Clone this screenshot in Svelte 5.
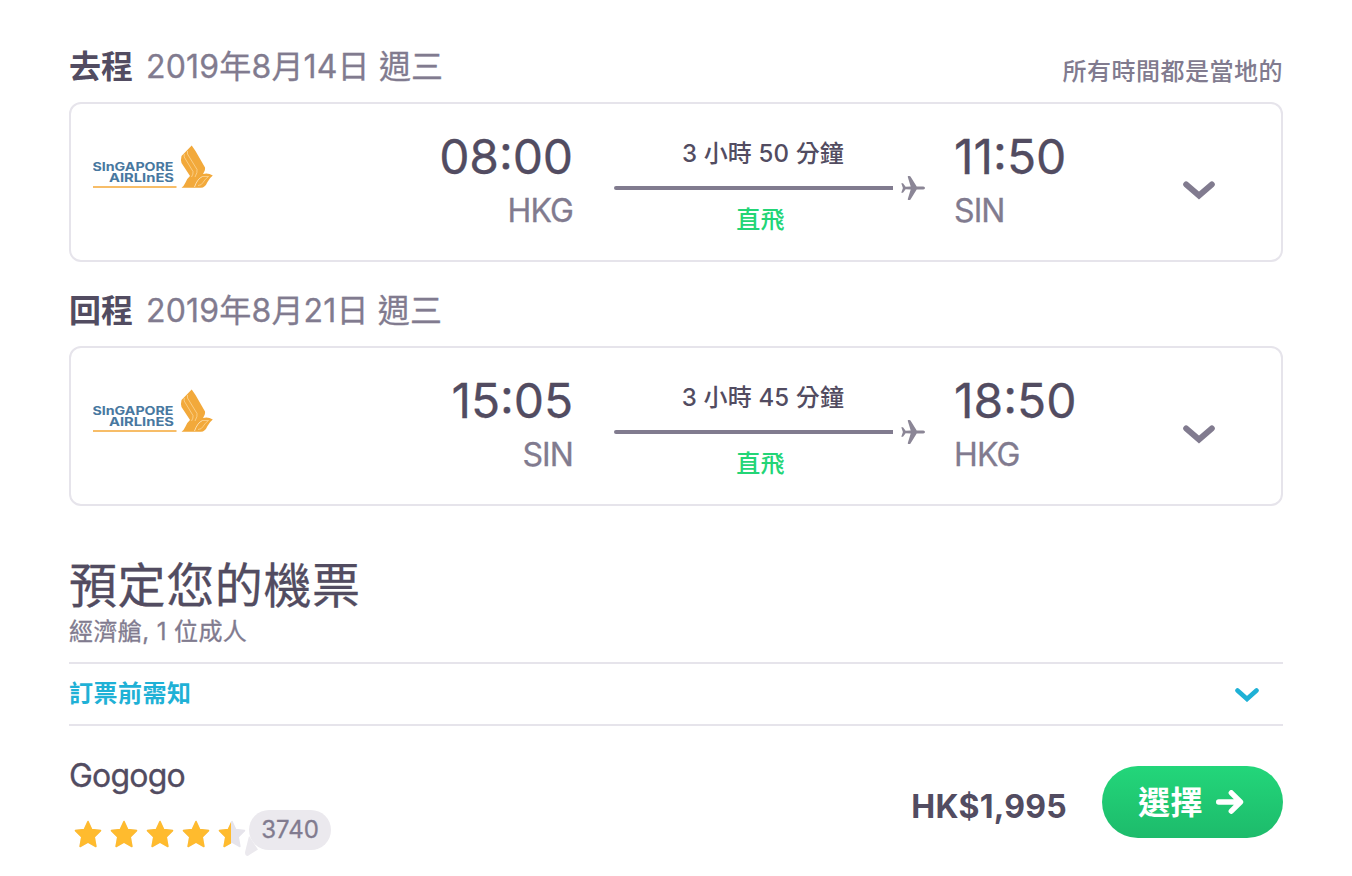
<script>
	const legs = [
		{
			label: "去程",
			date: "2019年8月14日 週三",
			departTime: "08:00",
			departCode: "HKG",
			duration: "3 小時 50 分鐘",
			arriveTime: "11:50",
			arriveCode: "SIN"
		},
		{
			label: "回程",
			date: "2019年8月21日 週三",
			departTime: "15:05",
			departCode: "SIN",
			duration: "3 小時 45 分鐘",
			arriveTime: "18:50",
			arriveCode: "HKG"
		}
	];

	const stars = [1, 1, 1, 1, 0.46];
	const starPath =
		"M14 1.5 L17.7 9.500 L26.500 10.600 L20.2 17 L21.900 26.500 L14 22.200 L6.100 26.500 L7.800 17 L1.500 10.600 L10.300 9.500 Z";
</script>

<div class="page">
	{#each legs as leg, i}
		<div class="leg-header">
			<div class="leg-title">
				<strong>{leg.label}</strong>
				<span>{leg.date}</span>
			</div>
			{#if i === 0}
				<div class="local-note">所有時間都是當地的</div>
			{/if}
		</div>

		<div class="leg-card">
			<svg class="logo" width="122" height="46" viewBox="0 0 122 46">
				<g class="logo-text">
					<text x="-0.5" y="26.300" textLength="81" lengthAdjust="spacingAndGlyphs">SInGAPORE</text>
					<text x="16" y="37" textLength="65" lengthAdjust="spacingAndGlyphs">AIRLInES</text>
				</g>
				<path d="M0 42 H83.500" stroke="#f7bd68" stroke-width="2" />
				<path
					d="M98.700 0.500 L102.500 6 L112 22.500 Q112.500 25 110 29 Q115 27.500 119.800 30.500 Q116.500 33 114.500 37 Q112 42.800 108 42.800 H88.500 Q91 41 92.500 37.500 Q94 33.500 97 31 L88.500 18 Q87.500 15 88.500 11 Z"
					fill="#f2a93b"
				/>
				<path
					d="M91.200 9 V12 L100 26.500 Q100.500 29 98.500 32 M94.500 6 V9 L104 24.500 Q104.800 27 102 32 M109.500 31.500 H115.500 Q112 34 110 37.500 Q108.500 40.500 105 40.500"
					fill="none"
					stroke="#fbd596"
					stroke-width="0.8"
				/>
				<path d="M101.500 42 Q104.500 33.500 109.500 31.500" fill="none" stroke="#fdebcc" stroke-width="0.8" />
			</svg>

			<div class="stop depart">
				<div class="time">{leg.departTime}</div>
				<div class="code">{leg.departCode}</div>
			</div>

			<div class="route">
				<div class="duration">{leg.duration}</div>
				<div class="line">
					<span></span>
					<svg width="24" height="24" viewBox="0 0 24 24">
						<path
							d="M0.300 7.200 H2 L4.600 10.700 L9.700 10.600 L6.800 0.900 Q6.600 0 7.400 0 H8.400 Q9.100 0 9.500 0.600 L15.700 10.600 H22.300 Q24 10.700 24 12 Q24 13.300 22.300 13.400 H15.700 L9.500 23.400 Q9.100 24 8.400 24 H7.400 Q6.600 24 6.800 23.100 L9.700 13.400 L4.600 13.300 L2 16.800 H0.300 L1.900 12 Z"
							fill="#8b8696"
						/>
					</svg>
				</div>
				<div class="direct">直飛</div>
			</div>

			<div class="stop arrive">
				<div class="time">{leg.arriveTime}</div>
				<div class="code">{leg.arriveCode}</div>
			</div>

			<svg class="chevron" width="32" height="19" viewBox="0 0 32 19">
				<path d="M3.200 3.500 L16 14.500 L28.800 3.500" fill="none" stroke="#817b8f" stroke-width="6" stroke-linecap="round" />
			</svg>
		</div>
	{/each}

	<h1>預定您的機票</h1>
	<p class="cabin">經濟艙, 1 位成人</p>

	<div class="notice">
		<span>訂票前需知</span>
		<svg width="24" height="15" viewBox="0 0 24 15">
			<path d="M2.500 3.500 L12 12 L21.500 3.500" fill="none" stroke="#1fb1d6" stroke-width="4.600" stroke-linecap="round" />
		</svg>
	</div>

	<div class="offer">
		<div class="agent">
			<div class="agent-name">Gogogo</div>
			<div class="rating">
				{#each stars as fill}
					<svg class="star" width="28" height="28" viewBox="0 0 28 28">
						<path d={starPath} fill="#e6e4eb" stroke="#e6e4eb" stroke-width="1.500" stroke-linejoin="round" />
						<path
							d={starPath}
							fill="#ffbb2e"
							stroke="#ffbb2e"
							stroke-width="1.500"
							stroke-linejoin="round"
							style:clip-path="inset(0 {(1 - fill) * 100}% 0 0) view-box"
						/>
					</svg>
				{/each}
				<div class="reviews">
					<svg width="16" height="20" viewBox="0 0 16 20">
						<path d="M4 0 L0.200 15.500 Q-0.500 19.500 2 19.900 Q3.500 20.100 5 18.500 L13 13.500 Z" fill="#ebe9ee" />
					</svg>
					<span>3740</span>
				</div>
			</div>
		</div>

		<div class="price">HK$1,995</div>
		<button>
			<span>選擇</span>
			<svg width="28" height="24" viewBox="0 0 28 24">
				<path d="M2.700 12 H24 M15.300 2.800 L24.500 12 L15.300 21.200" fill="none" stroke="#fff" stroke-width="5.400" stroke-linecap="round" stroke-linejoin="round" />
			</svg>
		</button>
	</div>
</div>

<style>
	:global(body) {
		margin: 0;
		background: #fff;
	}

	.page {
		box-sizing: border-box;
		width: 1352px;
		height: 876px;
		padding: 18px 69px 0;
		overflow: hidden;
		font-family: Inter, "Noto Sans CJK TC", sans-serif;
		color: #524c61;
	}

	.leg-header {
		display: flex;
		justify-content: space-between;
		height: 84px;
	}

	.leg-title {
		display: flex;
		gap: 13px;
		padding-top: 25px;
		font-size: 32px;
		line-height: 48px;
	}

	.leg-title span {
		color: #817b8f;
		letter-spacing: 0.17px;
		-webkit-text-stroke: 0.3px #817b8f;
	}

	.local-note {
		padding-top: 36px;
		font-size: 24px;
		font-weight: 500;
		line-height: 36px;
		letter-spacing: 0.5px;
		color: #817b8f;
	}

	.leg-card {
		box-sizing: border-box;
		display: flex;
		height: 160px;
		padding: 0 66px 0 22px;
		border: 2px solid #e6e4eb;
		border-radius: 12px;
	}

	.logo {
		margin-top: 41px;
	}

	.logo-text {
		font-family: Inter, sans-serif;
		font-size: 12px;
		font-weight: 700;
		fill: #4878a0;
	}

	.stop {
		padding-top: 24px;
	}

	.depart {
		width: 358px;
		text-align: right;
	}

	.arrive {
		width: 229px;
		margin-left: 28px;
	}

	.time {
		font-size: 48px;
		line-height: 58px;
		font-feature-settings: "case";
		-webkit-text-stroke: 0.3px #524c61;
	}

	.depart .time {
		letter-spacing: -0.1px;
	}

	.code {
		font-size: 32px;
		line-height: 50px;
		letter-spacing: -0.9px;
		color: #817b8f;
		-webkit-text-stroke: 0.3px #817b8f;
	}

	.route {
		width: 312px;
		margin-left: 41px;
		padding-top: 32px;
	}

	.duration,
	.direct {
		width: 298px;
		font-size: 24px;
		font-weight: 500;
		line-height: 36px;
		letter-spacing: 0.15px;
		text-align: center;
	}

	.direct {
		width: 293px;
		line-height: 32px;
		color: #23d576;
	}

	.line {
		display: flex;
		align-items: center;
		gap: 8px;
		height: 32px;
	}

	.line span {
		width: 279px;
		height: 4px;
		background: #817b8f;
		border-radius: 2px 0 0 2px;
	}

	.chevron {
		margin-top: 77px;
	}

	h1 {
		margin: 45px 0 0;
		font-size: 48px;
		font-weight: 400;
		line-height: 70px;
		letter-spacing: 0.6px;
		-webkit-text-stroke: 0.3px #524c61;
	}

	.cabin {
		margin: 0;
		height: 41px;
		font-size: 24px;
		line-height: 22px;
		letter-spacing: 0.4px;
		color: #817b8f;
		-webkit-text-stroke: 0.3px #817b8f;
	}

	.notice {
		display: flex;
		align-items: center;
		justify-content: space-between;
		height: 60px;
		padding-right: 24px;
		border-top: 2px solid #e6e4eb;
		border-bottom: 2px solid #e6e4eb;
		font-size: 24px;
		font-weight: 700;
		letter-spacing: 0.5px;
		color: #1fb1d6;
	}

	.notice span {
		padding-bottom: 5px;
	}

	.offer {
		display: flex;
	}

	.agent {
		flex: 1;
		padding-top: 26px;
	}

	.agent-name {
		font-size: 32px;
		line-height: 48px;
		letter-spacing: -0.8px;
		-webkit-text-stroke: 0.3px #524c61;
	}

	.rating {
		display: flex;
		gap: 8px;
		padding: 10px 0 0 5px;
	}

	.star {
		margin-top: 10px;
	}

	.reviews {
		position: relative;
		box-sizing: border-box;
		width: 82px;
		height: 40px;
		margin-left: -5px;
		border-radius: 20px;
		background: #ebe9ee;
		font-size: 24px;
		line-height: 40px;
		text-align: center;
		color: #817b8f;
		-webkit-text-stroke: 0.3px #817b8f;
	}

	.reviews svg {
		position: absolute;
		left: -4px;
		top: 26px;
	}

	.reviews span {
		position: relative;
	}

	.price {
		padding-top: 57px;
		font-size: 32px;
		font-weight: 700;
		line-height: 48px;
		letter-spacing: 0.25px;
	}

	button {
		display: flex;
		align-items: center;
		gap: 13px;
		box-sizing: border-box;
		width: 181px;
		height: 72px;
		margin: 40px 0 0 35px;
		padding: 0 38px 0 36px;
		border: none;
		border-radius: 36px;
		background: linear-gradient(#23d67a, #1dbb6b);
		font-family: inherit;
		font-size: 32px;
		font-weight: 700;
		letter-spacing: 0.5px;
		color: #fff;
	}

	button span {
		padding-bottom: 4px;
	}

	button svg {
		flex: none;
	}
</style>
